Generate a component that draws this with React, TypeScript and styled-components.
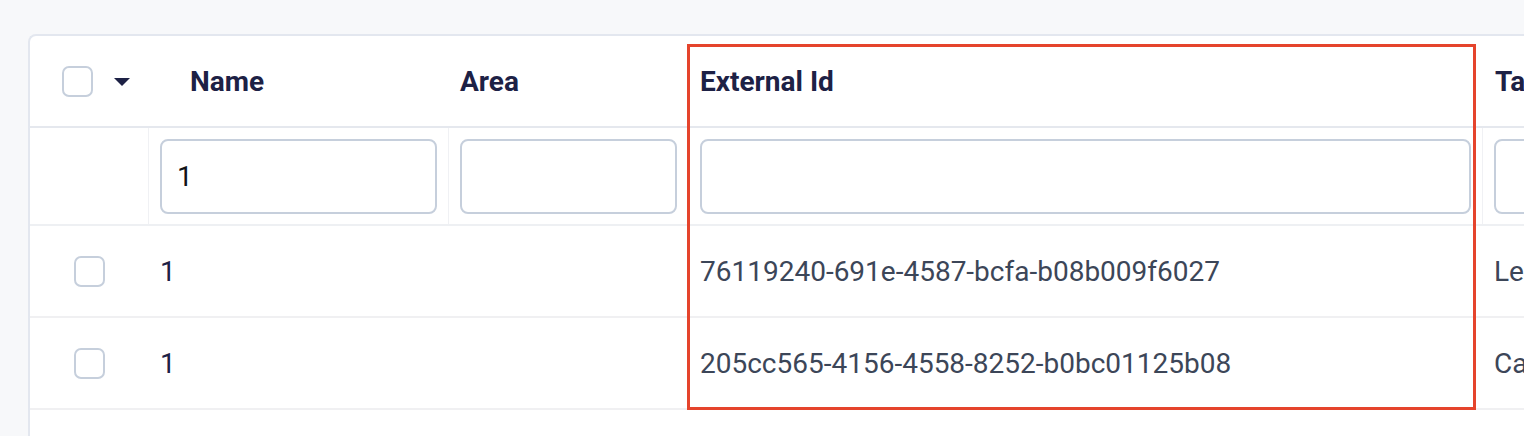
import styled, { createGlobalStyle } from "styled-components";

const GlobalStyle = createGlobalStyle`
  html, body {
    margin: 0;
    padding: 0;
    background: #f7f8fa;
    overflow: hidden;
    font-family: Roboto, "Liberation Sans", sans-serif;
  }
`;

const Page = styled.div`
  width: 1524px;
  height: 436px;
  padding: 34px 0 0 28px;
  box-sizing: border-box;
  overflow: hidden;
`;

const Card = styled.div`
  position: relative;
  width: max-content;
  min-height: 420px;
  background: #ffffff;
  border-top: 2px solid #e3e7ef;
  border-left: 2px solid #e3e7ef;
  border-top-left-radius: 8px;
`;

const columns = "119px 300px 240px 794px 300px";

const Row = styled.div<{ $height: number; $line: string }>`
  display: grid;
  grid-template-columns: ${columns};
  height: ${(p) => p.$height}px;
  border-bottom: 2px solid ${(p) => p.$line};
  align-items: center;
`;

const HeadCell = styled.div<{ $pad?: number }>`
  padding-left: ${(p) => p.$pad ?? 11}px;
  font-size: 28px;
  font-weight: 700;
  color: #1d2145;
  white-space: nowrap;
`;

const SelectCell = styled.div<{ $pad: number }>`
  display: flex;
  align-items: center;
  gap: 21px;
  padding-left: ${(p) => p.$pad}px;
`;

const Checkbox = styled.span`
  display: block;
  width: 31px;
  height: 31px;
  box-sizing: border-box;
  border: 2px solid #c6cfdc;
  border-radius: 7px;
  background: #fff;
`;

const Caret = styled.svg`
  display: block;
  width: 16px;
  height: 8px;
  margin-top: 2px;
`;

const FilterCell = styled.div`
  height: 100%;
  box-sizing: border-box;
  border-right: 1px solid #f0f1f4;
  display: flex;
  align-items: center;
  padding: 0 11px;
`;

const FilterInput = styled.div`
  width: 100%;
  height: 75px;
  box-sizing: border-box;
  border: 2px solid #c6cfdc;
  border-radius: 8px;
  display: flex;
  align-items: center;
  padding-left: 15px;
  font-size: 28px;
  color: #111318;
`;

const Cell = styled.div<{ $tone?: "name" | "text" }>`
  padding-left: 11px;
  font-size: 28px;
  color: ${(p) => (p.$tone === "name" ? "#1d2145" : "#3c4658")};
  white-space: nowrap;
`;

const Highlight = styled.div`
  position: absolute;
  left: 657px;
  top: 8px;
  width: 789px;
  height: 366px;
  box-sizing: border-box;
  border: 3px solid #e5442c;
  pointer-events: none;
`;

const rows = [
  { name: "1", id: "76119240-691e-4587-bcfa-b08b009f6027", tag: "Le" },
  { name: "1", id: "205cc565-4156-4558-8252-b0bc01125b08", tag: "Ca" },
];

export default function App() {
  return (
    <>
      <GlobalStyle />
      <Page>
        <Card>
          <Row $height={90} $line="#e5e8ee">
            <SelectCell $pad={32}>
              <Checkbox />
              <Caret viewBox="0 0 16 8">
                <path d="M0 0h16L8 8z" fill="#1d2145" />
              </Caret>
            </SelectCell>
            <HeadCell $pad={41}>Name</HeadCell>
            <HeadCell>Area</HeadCell>
            <HeadCell>External Id</HeadCell>
            <HeadCell $pad={12}>Ta</HeadCell>
          </Row>
          <Row $height={96} $line="#eef0f3">
            <FilterCell />
            <FilterCell>
              <FilterInput>1</FilterInput>
            </FilterCell>
            <FilterCell>
              <FilterInput />
            </FilterCell>
            <FilterCell>
              <FilterInput />
            </FilterCell>
            <FilterCell>
              <FilterInput />
            </FilterCell>
          </Row>
          {rows.map((r) => (
            <Row key={r.id} $height={90} $line="#f0f0f2">
              <SelectCell $pad={44}>
                <Checkbox />
              </SelectCell>
              <Cell $tone="name">{r.name}</Cell>
              <Cell />
              <Cell>{r.id}</Cell>
              <Cell>{r.tag}</Cell>
            </Row>
          ))}
          <Highlight />
        </Card>
      </Page>
    </>
  );
}
